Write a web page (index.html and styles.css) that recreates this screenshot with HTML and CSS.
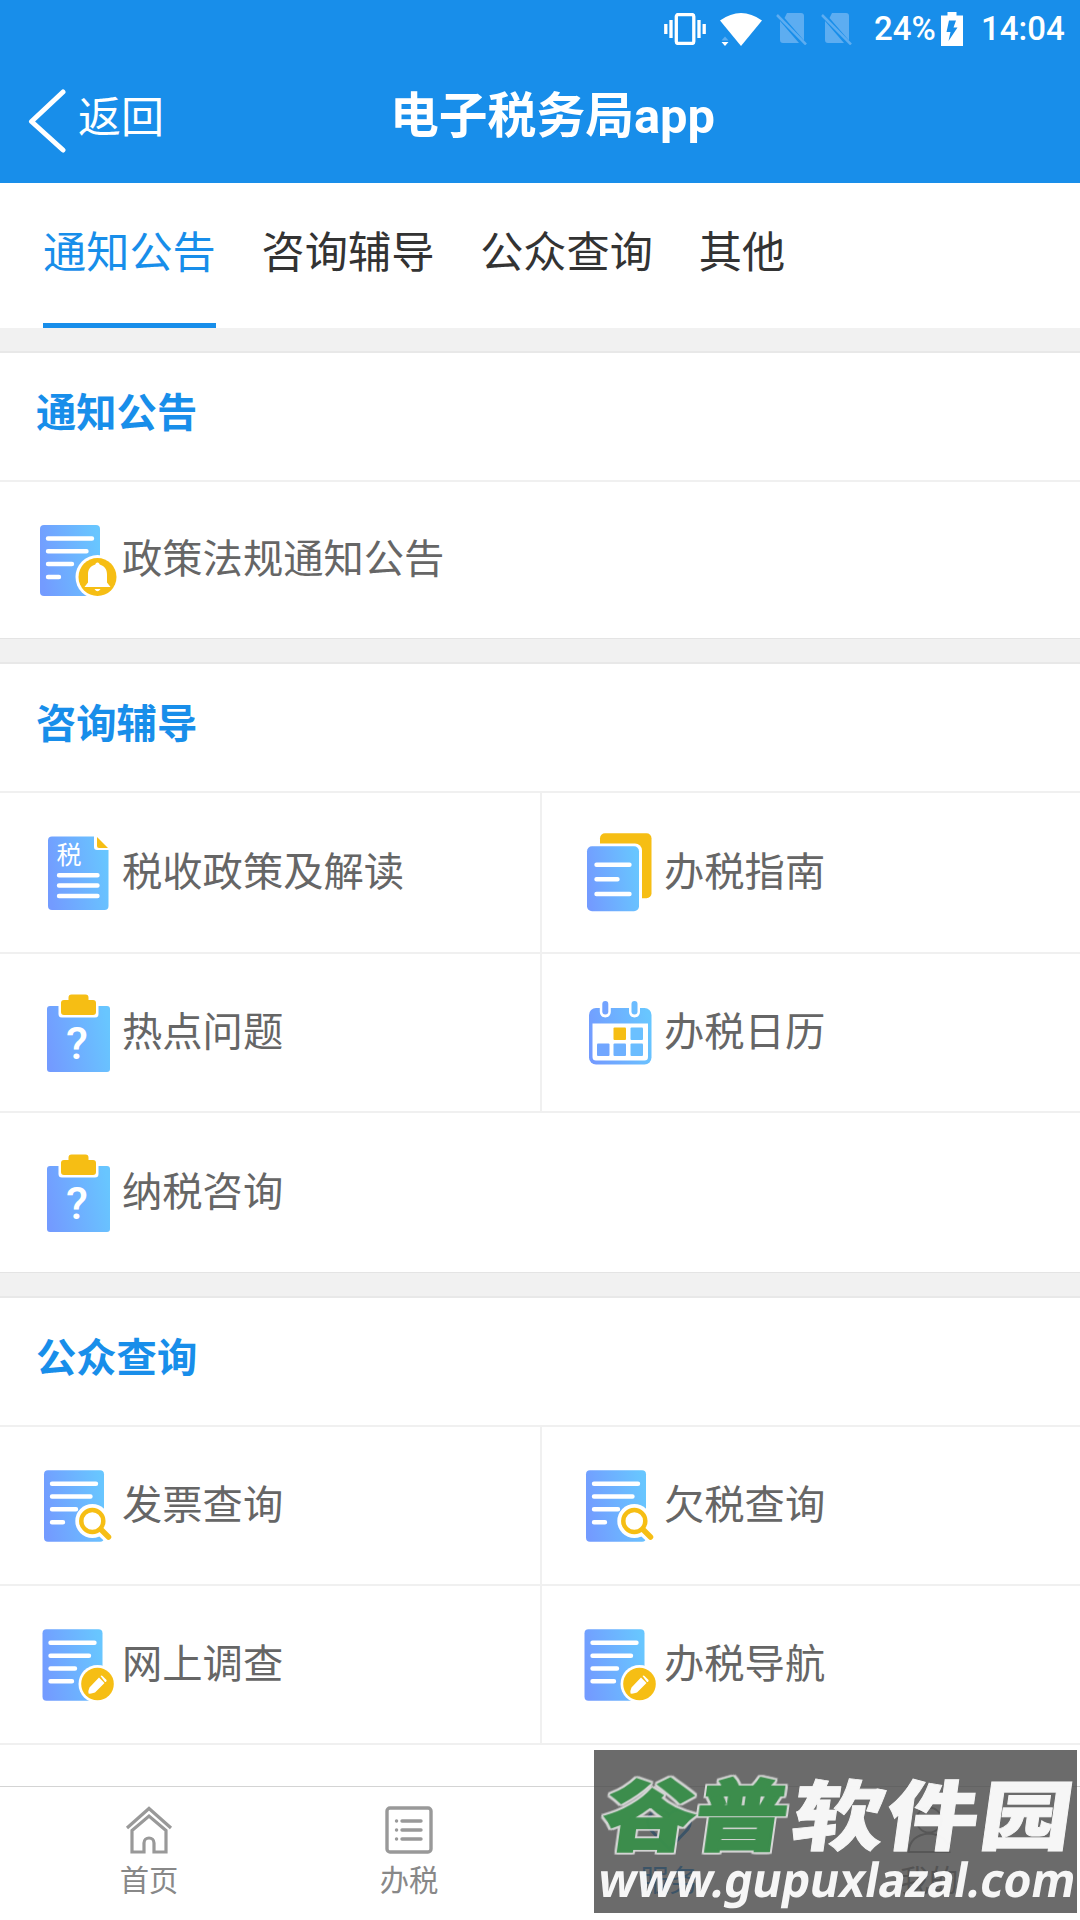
FILE: index.html
```html
<!DOCTYPE html>
<html lang="zh">
<head>
    <meta charset="UTF-8">
    <meta name="viewport" content="width=device-width, initial-scale=1.0">
    <title>电子税务局app</title>
    <link rel="stylesheet" href="styles.css">
</head>
<body>
    <!-- 图标定义 -->
    <svg class="defs" width="0" height="0">
        <defs>
            <linearGradient id="blue" x1="0" y1="0.6" x2="1" y2="0.4">
                <stop offset="0" stop-color="#739bff"/>
                <stop offset="1" stop-color="#68c6ff"/>
            </linearGradient>
            <symbol id="i-bell" viewBox="0 0 88 88">
                <rect x="8" y="9" width="60" height="71" rx="4" fill="url(#blue)"/>
                <path class="line" d="M16 22.500H60M16 35.300H54.500M16 48H40M16 61H27"/>
                <circle cx="65.500" cy="61" r="22" fill="#fff"/>
                <circle cx="65.500" cy="61" r="19" fill="#f6be14"/>
                <path d="M65.500 46.500c1.500 0 1.800 1 2.200 2 5 1.500 7.300 5 7.300 10v8l3.500 4.500H52.500L56 66.500v-8c0-5 2.300-8.500 7.300-10 .4-1 .7-2 2.200-2zM62.500 73h6q-3 4.500-6 0z" fill="#fff"/>
            </symbol>
            <symbol id="i-tax" viewBox="0 0 88 88">
                <path d="M20 7.500H62V18a3 3 0 0 0 3 3H76.500V77a4 4 0 0 1-4 4H20a4 4 0 0 1-4-4V11.500a4 4 0 0 1 4-4z" fill="url(#blue)"/>
                <path d="M65 8L76 19H67a2 2 0 0 1-2-2z" fill="#f6be14"/>
                <text x="24.500" y="35" class="icon-tax">税</text>
                <path class="line" d="M27 46.300H65.500M27 56.500H65.500M27 67H65.500"/>
            </symbol>
            <symbol id="i-guide" viewBox="0 0 88 88">
                <rect x="26" y="4.300" width="51.500" height="65" rx="5" fill="#f6be14"/>
                <rect x="10" y="14.500" width="58" height="70" rx="7" fill="#fff"/>
                <rect x="13" y="17.300" width="52" height="65" rx="5" fill="url(#blue)"/>
                <path class="line" d="M22.500 35.800H55.500M22.500 50.300H43.500M22.500 65H55.500"/>
            </symbol>
            <symbol id="i-ask" viewBox="0 0 88 88">
                <rect x="15" y="17" width="63" height="66" rx="3" fill="url(#blue)"/>
                <path d="M26.500 16H66.500V25a3.500 3.500 0 0 1-3.500 3.500H30a3.500 3.500 0 0 1-3.500-3.500z" fill="#fff"/>
                <path d="M39.500 5.500H53.500a3 3 0 0 1 3 3V11H61a3 3 0 0 1 3 3v9a3 3 0 0 1-3 3H32a3 3 0 0 1-3-3V14a3 3 0 0 1 3-3h4.500V8.500a3 3 0 0 1 3-3z" fill="#f6be14"/>
                <text x="45" y="70" class="icon-ask">?</text>
            </symbol>
            <symbol id="i-calendar" viewBox="0 0 88 88">
                <rect x="15" y="19" width="62.500" height="56.500" rx="7" fill="url(#blue)"/>
                <path d="M18.500 34.500H74V68a3.500 3.500 0 0 1-3.500 3.500H22a3.500 3.500 0 0 1-3.500-3.500z" fill="#fff"/>
                <path d="M31.300 16V23M60.500 16V23" stroke="#fff" stroke-width="11" stroke-linecap="round"/>
                <path d="M31.300 15V22.500" stroke="#73a3ff" stroke-width="6" stroke-linecap="round"/>
                <path d="M60.500 15V22.500" stroke="#6bbcff" stroke-width="6" stroke-linecap="round"/>
                <rect x="39.500" y="38.500" width="12.500" height="12.500" rx="1" fill="#f6be14"/>
                <rect x="56.500" y="38.500" width="12.500" height="12.500" rx="1" fill="#6bc0ff"/>
                <rect x="23" y="54.500" width="12.500" height="12.500" rx="1" fill="#71a6ff"/>
                <rect x="39.500" y="54.500" width="12.500" height="12.500" rx="1" fill="#6eb1ff"/>
                <rect x="56.500" y="54.500" width="12.500" height="12.500" rx="1" fill="#6bbdff"/>
            </symbol>
            <symbol id="i-search" viewBox="0 0 88 88">
                <rect x="12" y="8.300" width="60" height="71.500" rx="4" fill="url(#blue)"/>
                <path class="line" d="M20 21.700H64M20 34.500H58.500M20 47.300H44M20 60.300H31"/>
                <path d="M70 70L77 76.500" stroke="#fff" stroke-width="10"/>
                <circle cx="60.300" cy="59" r="17" fill="#fff"/>
                <circle cx="60.300" cy="59" r="11" fill="none" stroke="#f6be14" stroke-width="4.500"/>
                <path d="M69 67.500L76.500 75" stroke="#f6be14" stroke-width="5.500" stroke-linecap="round"/>
            </symbol>
            <symbol id="i-edit" viewBox="0 0 88 88">
                <rect x="10.500" y="8.300" width="60" height="71.500" rx="4" fill="url(#blue)"/>
                <path class="line" d="M18.500 21.800H62.500M18.500 34.800H57M18.500 47.500H43M18.500 60.300H40"/>
                <circle cx="65.500" cy="63" r="19" fill="#fff"/>
                <circle cx="65.500" cy="63" r="16.300" fill="#f6be14"/>
                <path d="M67 56.500L72.500 62L63 71.500Q59 73 56.500 72.500Q56 69.500 57.500 66.500zM68.500 55a1.500 1.500 0 0 1 2 0l4 4a1.500 1.500 0 0 1-1.500 2z" fill="#fff"/>
            </symbol>
            <symbol id="i-nosim" viewBox="0 0 31 32">
                <path d="M11 0H25a3 3 0 0 1 3 3V27.500L8.500 5zM4 8L23 30H7a3 3 0 0 1-3-3z" fill="#5dadf1"/>
                <path d="M1 2L30 31.500" stroke="#5dadf1" stroke-width="2.500"/>
            </symbol>
        </defs>
    </svg>

    <div class="header">
        <div class="status">
            <svg class="vibrate" width="42" height="32" viewBox="0 0 42 32">
                <rect x="12.300" y="1.500" width="17.500" height="29" rx="2" fill="none" stroke="#fff" stroke-width="3.300"/>
                <path d="M1.800 11V21M7 7V25M35 7V25M40.200 11V21" stroke="#fff" stroke-width="3.300"/>
            </svg>
            <svg class="wifi" width="42" height="33" viewBox="0 0 42 33">
                <path d="M0 7.500Q21-7.500 42 7.500L21 33z" fill="#fff"/>
                <path d="M1.500 27.500L5 23.500L8.500 27.500z" fill="#5dadf1"/>
                <path d="M1.500 29L5 33L8.500 29z" fill="#fff"/>
            </svg>
            <svg class="sim" width="31" height="32"><use href="#i-nosim"/></svg>
            <svg class="sim" width="31" height="32"><use href="#i-nosim"/></svg>
            <span class="percent">24%</span>
            <svg class="battery" width="22" height="34" viewBox="0 0 22 34">
                <path d="M6.500 0H15.500V3.500H22V34H0V3.500H6.500z" fill="#fff"/>
                <path d="M8 8.500H15L12.500 15.500H16.500L7.500 29L9.500 20H5.500z" fill="#188eea"/>
            </svg>
            <span class="clock">14:04</span>
        </div>
        <div class="bar">
            <div class="back">
                <svg width="38" height="64" viewBox="0 0 38 64">
                    <path d="M35 3L3.500 32.500L35 61" fill="none" stroke="#fff" stroke-width="5" stroke-linecap="round" stroke-linejoin="round"/>
                </svg>
                <span>返回</span>
            </div>
            <h1>电子税务局app</h1>
        </div>
    </div>

    <div class="tabs">
        <div class="tab active">通知公告</div>
        <div class="tab">咨询辅导</div>
        <div class="tab">公众查询</div>
        <div class="tab">其他</div>
    </div>

    <div class="content">
        <div class="card">
            <h3>通知公告</h3>
            <div class="list single">
                <div class="item wide"><svg class="icon"><use href="#i-bell"/></svg>政策法规通知公告</div>
            </div>
        </div>

        <div class="card">
            <h3>咨询辅导</h3>
            <div class="list guide">
                <div class="item"><svg class="icon"><use href="#i-tax"/></svg>税收政策及解读</div>
                <div class="item"><svg class="icon"><use href="#i-guide"/></svg>办税指南</div>
                <div class="item"><svg class="icon"><use href="#i-ask"/></svg>热点问题</div>
                <div class="item"><svg class="icon"><use href="#i-calendar"/></svg>办税日历</div>
                <div class="item wide"><svg class="icon"><use href="#i-ask"/></svg>纳税咨询</div>
            </div>
        </div>

        <div class="card">
            <h3>公众查询</h3>
            <div class="list">
                <div class="item"><svg class="icon"><use href="#i-search"/></svg>发票查询</div>
                <div class="item"><svg class="icon"><use href="#i-search"/></svg>欠税查询</div>
                <div class="item"><svg class="icon"><use href="#i-edit"/></svg>网上调查</div>
                <div class="item"><svg class="icon"><use href="#i-edit"/></svg>办税导航</div>
                <div class="item wide"></div>
            </div>
        </div>
    </div>

    <div class="nav">
        <div class="nav-item">
            <svg width="48" height="48" viewBox="0 0 48 48">
                <path d="M2 22L24 2.500L46 22" stroke-width="3.200"/>
                <path d="M7 46V24.500L24 10L41 24.500V46H29V37a5 5 0 0 0-10 0V46z" stroke-width="3.200"/>
            </svg>
            <span>首页</span>
        </div>
        <div class="nav-item">
            <svg width="48" height="48" viewBox="0 0 48 48">
                <rect x="2" y="2" width="44" height="44" rx="3" stroke-width="3.400"/>
                <path d="M17 15H36M17 24H36M17 33H36M11.500 15H11.600M11.500 24H11.600M11.500 33H11.600" stroke-width="3.400" stroke-linecap="round"/>
            </svg>
            <span>办税</span>
        </div>
        <div class="nav-item on">
            <svg width="48" height="48" viewBox="0 0 48 48">
                <path d="M24 43L5 23C-1 14 6 4 15 4Q21 4 24 9Q28 4 33 4C42 4 49 14 43 23z" stroke-width="3"/>
            </svg>
            <span>服务</span>
        </div>
        <div class="nav-item">
            <svg width="48" height="48" viewBox="0 0 48 48">
                <circle cx="24" cy="14" r="12.500" stroke-width="2"/>
                <path d="M3.500 46Q5 29 24 27.500Q43 29 44.500 46z" stroke-width="2"/>
            </svg>
            <span>我的</span>
        </div>
    </div>

    <!-- 水印 -->
    <svg class="watermark" width="483" height="163" viewBox="0 0 483 163">
        <g transform="translate(6 94) skewX(-8) scale(1 .83)">
            <text class="wm-green" x="0" y="0" textLength="184">谷普</text>
            <text class="wm-white" x="189" y="0" textLength="280">软件园</text>
        </g>
        <g transform="translate(2 147) skewX(-10)">
            <text class="wm-url" x="0" y="0" textLength="477" lengthAdjust="spacingAndGlyphs">www.gupuxlazal.com</text>
        </g>
    </svg>
</body>
</html>
```

FILE: styles.css
```css
* { box-sizing: border-box; }
body { margin: 0; width: 1080px; height: 1920px; overflow: hidden; position: relative; display: flex; flex-direction: column; background: #f1f1f1; font-family: Roboto, "Noto Sans CJK SC", sans-serif; color: #666; }
.defs { position: absolute; }

.header { flex: none; height: 183px; background: #188eea; color: #fff; }
.status { display: flex; align-items: center; height: 58px; padding-left: 664px; font-size: 33px; font-weight: 500; line-height: 58px; }
.wifi { margin-left: 14px; }
.sim { margin-left: 14px; }
.percent { width: 67px; margin-left: 22px; }
.clock { margin-left: 18px; }
.bar { display: flex; align-items: center; height: 125px; }
.back { display: flex; align-items: center; width: 390px; padding-left: 28px; font-size: 43px; line-height: 60px; }
.back svg { margin-top: 1px; }
.back span { margin: -6px 0 0 12px; }
.bar h1 { margin: -7px 0 0; font-size: 48.8px; line-height: 60px; font-weight: bold; }

.tabs { flex: none; display: flex; gap: 45.8px; height: 145px; padding-left: 43px; background: #fff; font-size: 43.2px; color: #333; }
.tab { line-height: 141px; border-bottom: 5px solid transparent; }
.tab.active { color: #188eea; border-bottom-color: #188eea; }

.content { flex: 1; overflow: hidden; }
.card { margin-top: 23px; background: #fff; border-top: 2px solid #e8e8e8; border-bottom: 1px solid #e4e4e4; }
.card h3 { margin: 0; height: 129px; padding-left: 36px; border-bottom: 2px solid #f0f0f0; font-size: 40.3px; line-height: 121px; font-weight: bold; color: #188eea; }
.list { display: grid; grid-template-columns: 542px 538px; grid-auto-rows: 159px; }
.list.single { grid-auto-rows: 156px; }
.list.guide { grid-template-rows: 161px 159px 159px; }
.item { display: flex; align-items: center; padding-left: 32px; border-bottom: 2px solid #f0f0f0; font-size: 40.3px; line-height: 60px; }
.item:nth-child(odd):not(.wide) { border-right: 2px solid #f0f0f0; }
.item.wide { grid-column: span 2; border-bottom: none; }
.icon { width: 88px; height: 88px; margin-right: 2px; }
.line { fill: none; stroke: #fff; stroke-width: 4.4; stroke-linecap: round; }
.icon-tax { font-family: "Noto Sans CJK SC", sans-serif; font-size: 25px; fill: #fff; }
.icon-ask { font-family: Roboto, sans-serif; font-size: 45px; font-weight: 500; fill: #fff; text-anchor: middle; }

.nav { flex: none; display: flex; height: 134px; padding-left: 19px; border-top: 1px solid #d4d4d4; background: #fff; color: #888; }
.nav-item { display: flex; flex-direction: column; align-items: center; width: 260px; padding-top: 19px; font-size: 29.3px; line-height: 40px; }
.nav-item svg { fill: none; stroke: #999; }
.nav-item span { margin-top: 7px; }
.nav-item.on { color: #188eea; }
.nav-item.on svg { stroke: #188eea; }

.watermark { position: absolute; left: 594px; top: 1750px; overflow: visible; background: rgba(70,70,70,0.8); }
.watermark text { font-family: "Noto Sans CJK SC", sans-serif; font-weight: 900; font-size: 92px; opacity: 0.94; }
.watermark .wm-green { fill: #3a904b; stroke: #3a904b; stroke-width: 2.5px; filter: drop-shadow(2px 0 0 #ddd) drop-shadow(-2px 0 0 #ddd) drop-shadow(0 2px 0 #ddd) drop-shadow(0 -2px 0 #ddd); }
.watermark .wm-white { fill: #fff; stroke: #fff; stroke-width: 1px; }
.watermark .wm-url { font-family: "Noto Sans", sans-serif; font-size: 47px; font-weight: bold; fill: #fff; }
```
